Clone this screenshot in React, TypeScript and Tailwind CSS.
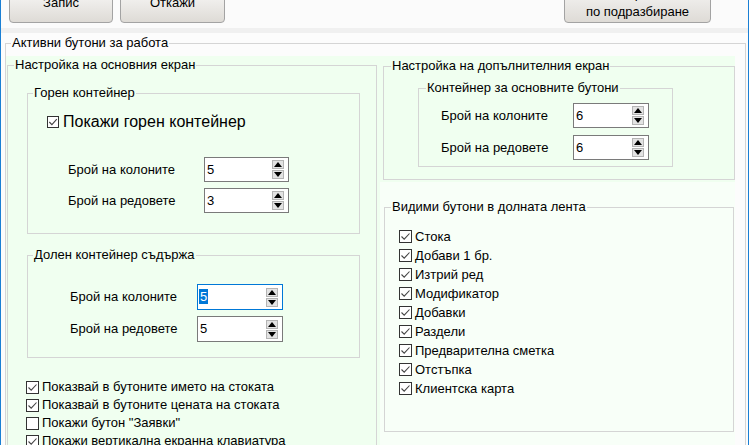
import React from "react";

function Check({ checked = true }: { checked?: boolean }) {
  return (
    <span className="flex h-[13px] w-[13px] shrink-0 items-center justify-center border border-[#333333] bg-white">
      {checked && (
        <svg width="11" height="11" viewBox="0 0 11 11">
          <path d="M1.5 5.5 L4.2 8.2 L9.5 2.5" fill="none" stroke="#444" strokeWidth="1.1" />
        </svg>
      )}
    </span>
  );
}

function Arrow({ up }: { up: boolean }) {
  return (
    <span className="flex h-[9px] w-[12px] items-center justify-center border border-[#b4b4b4] bg-[#e3e3e3]">
      <svg width="8" height="5" viewBox="0 0 8 5">
        {up ? <polygon points="0,5 8,5 4,0" fill="#000" /> : <polygon points="0,0 8,0 4,5" fill="#000" />}
      </svg>
    </span>
  );
}

function Spinner({ value, cls, focused = false }: { value: string; cls: string; focused?: boolean }) {
  return (
    <div className={`flex items-center bg-white ${cls} ${focused ? "border border-[#0078d7]" : "border border-[#7a7a7a]"}`}>
      <div className="flex-1 text-[13px] leading-[16px]">
        {focused ? (
          <span className="ml-[1px] bg-[#0078d7] px-[1px] text-white">{value}</span>
        ) : (
          <span className="ml-[2px]">{value}</span>
        )}
      </div>
      <div className="mr-[4px] flex flex-col gap-[1px]">
        <Arrow up={true} />
        <Arrow up={false} />
      </div>
    </div>
  );
}

function CheckRow({ label, checked = true, cls }: { label: string; checked?: boolean; cls: string }) {
  return (
    <div className={`flex items-center gap-[3px] text-[13px] ${cls}`}>
      <Check checked={checked} />
      <span className="whitespace-nowrap">{label}</span>
    </div>
  );
}

export default function App() {
  return (
    <div className="flex h-[445px] w-[749px] flex-col overflow-hidden border-l border-r border-[#1a7fd4] bg-[#fcfcfc] font-['Liberation_Sans',Arial,sans-serif] text-[13px] text-black">
      {/* top bar */}
      <div className="flex h-[28px] shrink-0 items-end overflow-hidden bg-[#fbfbfb] pb-[5px]">
        <button className="ml-[8px] flex h-[40px] w-[104px] items-center justify-center rounded-[4px] border border-[#a3a3a3] bg-gradient-to-b from-[#fdfdfd] to-[#dedbd6] text-[13px]">
          Запис
        </button>
        <button className="ml-[7px] flex h-[40px] w-[105px] items-center justify-center rounded-[4px] border border-[#a3a3a3] bg-gradient-to-b from-[#fdfdfd] to-[#dedbd6] text-[13px]">
          Откажи
        </button>
        <button className="ml-[339px] flex h-[46px] w-[147px] flex-col items-center justify-end rounded-[4px] border border-[#a3a3a3] bg-gradient-to-b from-[#fdfdfd] to-[#dedbd6] pb-[2px] text-[13px] leading-[16px]">
          <span className="mb-[2px]">Настройки</span>
          <span>по подразбиране</span>
        </button>
      </div>
      <div className="h-[5px] shrink-0 bg-[#f0f0f0]" />

      {/* main */}
      <div className="flex-1 bg-[#fcfcfc]">
        <fieldset className="ml-[4px] mt-[2px] h-[420px] w-[741px] min-w-0 border border-[#d5d5d5]">
          <legend className="ml-[5px] px-[1px] text-[13px] leading-[16px]">Активни бутони за работа</legend>
          <div className="flex items-start">
            {/* left panel */}
            <div className="mt-[5px] h-[400px] w-[374px] shrink-0 bg-[#f0fff0] pt-[1px]">
              <fieldset className="ml-[1px] h-[400px] w-[370px] min-w-0 border border-[#d5d5d5]">
                <legend className="ml-[6px] px-[1px] leading-[16px]">Настройка на основния екран</legend>

                <fieldset className="ml-[19px] mt-[12px] h-[149px] w-[333px] min-w-0 border border-[#d5d5d5]">
                  <legend className="ml-[5px] px-[1px] leading-[16px]">Горен контейнер</legend>
                  <div className="ml-[19px] mt-[11px] flex h-[20px] items-center gap-[4px]">
                    <span className="flex h-[12px] w-[12px] shrink-0 items-center justify-center border border-[#333333] bg-white">
                      <svg width="10" height="10" viewBox="0 0 10 10">
                        <path d="M1.3 5 L3.9 7.6 L8.8 2.2" fill="none" stroke="#444" strokeWidth="1.1" />
                      </svg>
                    </span>
                    <span className="whitespace-nowrap text-[16px] leading-[20px]">Покажи горен контейнер</span>
                  </div>
                  <div className="ml-[40px] mt-[25px] flex items-center">
                    <span className="w-[136px] shrink-0">Брой на колоните</span>
                    <Spinner value="5" cls="h-[25px] w-[85px]" />
                  </div>
                  <div className="ml-[40px] mt-[6px] flex items-center">
                    <span className="w-[136px] shrink-0">Брой на редовете</span>
                    <Spinner value="3" cls="h-[25px] w-[85px]" />
                  </div>
                </fieldset>

                <fieldset className="ml-[19px] mt-[13px] h-[111px] w-[333px] min-w-0 border border-[#d5d5d5]">
                  <legend className="ml-[5px] px-[1px] leading-[16px]">Долен контейнер съдържа</legend>
                  <div className="ml-[42px] mt-[21px] flex items-center">
                    <span className="w-[127px] shrink-0">Брой на колоните</span>
                    <Spinner value="5" cls="h-[26px] w-[86px]" focused={true} />
                  </div>
                  <div className="ml-[42px] mt-[6px] flex items-center">
                    <span className="w-[127px] shrink-0">Брой на редовете</span>
                    <Spinner value="5" cls="h-[26px] w-[86px]" />
                  </div>
                </fieldset>

                <div className="ml-[18px] mt-[20px] flex flex-col">
                  <CheckRow cls="h-[18px]" label="Показвай в бутоните името на стоката" />
                  <CheckRow cls="h-[18px]" label="Показвай в бутоните цената на стоката" />
                  <CheckRow cls="h-[18px]" label={'Покажи бутон "Заявки"'} checked={false} />
                  <CheckRow cls="h-[18px]" label="Покажи вертикална екранна клавиатура" />
                </div>
              </fieldset>
            </div>

            {/* right column */}
            <div className="mt-[5px] flex w-[355px] shrink-0 flex-col">
              <div className="h-[126px] bg-[#f0fff0] pt-[2px]">
                <fieldset className="ml-[3px] h-[122px] w-[352px] min-w-0 border border-[#d5d5d5]">
                  <legend className="ml-[7px] px-[1px] leading-[16px]">Настройка на допълнителния екран</legend>
                  <fieldset className="ml-[34px] mt-[6px] h-[87px] w-[255px] min-w-0 border border-[#d5d5d5]">
                    <legend className="ml-[7px] px-[1px] leading-[16px]">Контейнер за основните бутони</legend>
                    <div className="ml-[22px] mt-[7px] flex items-center">
                      <span className="w-[132px] shrink-0">Брой на колоните</span>
                      <Spinner value="6" cls="h-[25px] w-[76px]" />
                    </div>
                    <div className="ml-[22px] mt-[7px] flex items-center">
                      <span className="w-[132px] shrink-0">Брой на редовете</span>
                      <Spinner value="6" cls="h-[25px] w-[76px]" />
                    </div>
                  </fieldset>
                </fieldset>
              </div>
              <div className="h-[280px] bg-[#f8fff8] pt-[17px]">
                <fieldset className="ml-[4px] h-[233px] w-[350px] min-w-0 border border-[#d5d5d5]">
                  <legend className="ml-[6px] px-[1px] leading-[16px]">Видими бутони в долната лента</legend>
                  <div className="ml-[14px] mt-[12px] flex flex-col">
                    <CheckRow cls="h-[19px]" label="Стока" />
                    <CheckRow cls="h-[19px]" label="Добави 1 бр." />
                    <CheckRow cls="h-[19px]" label="Изтрий ред" />
                    <CheckRow cls="h-[19px]" label="Модификатор" />
                    <CheckRow cls="h-[19px]" label="Добавки" />
                    <CheckRow cls="h-[19px]" label="Раздели" />
                    <CheckRow cls="h-[19px]" label="Предварителна сметка" />
                    <CheckRow cls="h-[19px]" label="Отстъпка" />
                    <CheckRow cls="h-[19px]" label="Клиентска карта" />
                  </div>
                </fieldset>
              </div>
            </div>
          </div>
        </fieldset>
      </div>
    </div>
  );
}
